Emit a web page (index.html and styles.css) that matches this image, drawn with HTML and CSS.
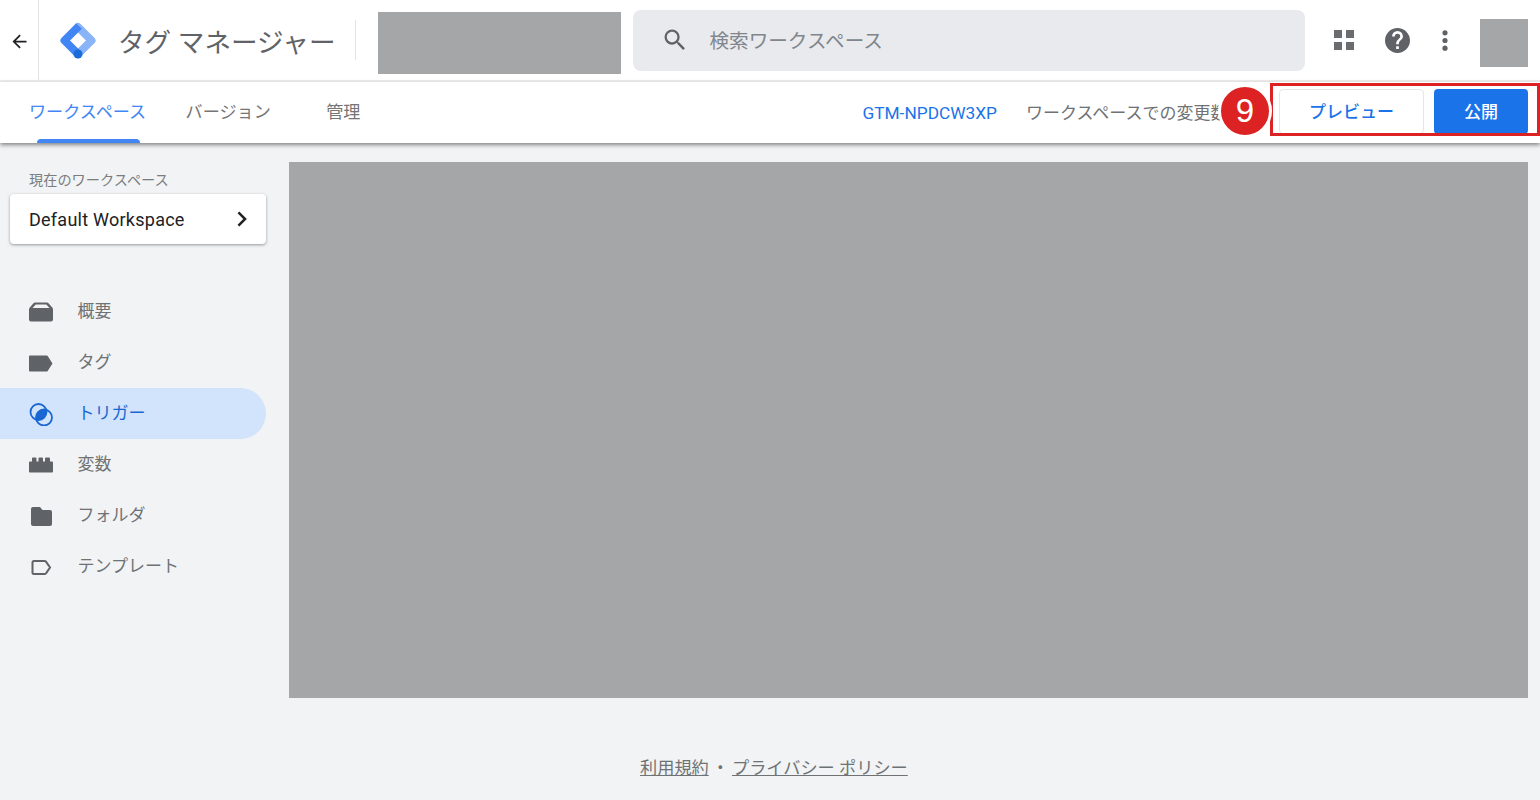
FILE: index.html
```html
<!DOCTYPE html>
<html lang="ja">
<head>
<meta charset="utf-8">
<title>タグ マネージャー</title>
<link rel="stylesheet" href="styles.css">
</head>
<body>
<header class="topbar">
  <div class="back">
    <svg class="back-icon" viewBox="0 0 24 24"><path d="M20 11H7.830l5.590-5.590L12 4l-8 8 8 8 1.410-1.410L7.830 13H20z"/></svg>
  </div>
  <svg class="logo" viewBox="0 0 38 40">
    <path d="M19 6 32.500 19.500 19 33" fill="none" stroke="#8ab4f8" stroke-width="8" stroke-linejoin="round" stroke-linecap="round"/>
    <path d="M20 5 5.500 19.500 19 33" fill="none" stroke="#4285f4" stroke-width="8" stroke-linejoin="round"/>
    <circle cx="19" cy="33" r="4.500" fill="#1a6cd9"/>
  </svg>
  <div class="product">タグ マネージャー</div>
  <div class="divider"></div>
  <div class="redacted account"></div>
  <div class="search">
    <svg class="search-icon" viewBox="0 0 24 24"><path d="M15.500 14h-.790l-.280-.270A6.470 6.470 0 0 0 16 9.500 6.500 6.500 0 1 0 9.500 16c1.610 0 3.090-.590 4.230-1.570l.270.280v.790l5 4.990L20.490 19l-4.990-5zm-6 0C7.010 14 5 11.990 5 9.500S7.010 5 9.500 5 14 7.010 14 9.500 11.990 14 9.500 14z"/></svg>
    <span class="search-text">検索ワークスペース</span>
  </div>
  <div class="top-icons">
    <svg class="apps" viewBox="0 0 20 20"><path d="M0 0h8v8H0zM12 0h8v8h-8zM0 12h8v8H0zM12 12h8v8h-8z"/></svg>
    <svg class="help" viewBox="0 0 24 24"><path d="M12 0a12 12 0 1 0 0 24 12 12 0 0 0 0-24zm1.300 20.200h-2.600v-2.600h2.600zm2.700-9.300-1.200 1.200c-1 1-1.500 1.700-1.500 3.400h-2.600V15c0-1.300.5-2.500 1.500-3.500l1.600-1.600c.5-.5.800-1.100.8-1.800a2.600 2.600 0 0 0-5.200 0H6.800a5.200 5.200 0 0 1 10.400 0c0 1.100-.5 2.100-1.200 2.800z"/></svg>
    <svg class="more" viewBox="0 0 6 22"><circle cx="3" cy="3" r="2.700"/><circle cx="3" cy="11" r="2.700"/><circle cx="3" cy="19" r="2.700"/></svg>
    <div class="redacted avatar"></div>
  </div>
</header>

<nav class="tabbar">
  <a class="tab active">ワークスペース<span class="indicator"></span></a>
  <a class="tab version">バージョン</a>
  <a class="tab admin">管理</a>
  <div class="tab-right">
    <span class="gtm-id">GTM-NPDCW3XP</span>
    <span class="changes">ワークスペースでの変更数</span>
    <button class="btn preview">プレビュー</button>
    <button class="btn publish">公開</button>
  </div>
  <div class="callout-box"></div>
  <div class="callout-badge">9</div>
</nav>

<div class="layout">
  <aside class="sidebar">
    <div class="ws-label">現在のワークスペース</div>
    <div class="ws-card">
      <span>Default Workspace</span>
      <svg class="chev" viewBox="0 0 12 18"><path d="M2 1.500 9.500 9 2 16.500" fill="none" stroke="#202124" stroke-width="2.800"/></svg>
    </div>
    <ul class="nav">
      <li class="nav-item">
        <svg class="nav-icon" viewBox="0 0 24 24"><path d="M6 2.500h12a2 2 0 0 1 1.500.7L23 7.300c.6.600 1 1.200 1 2.200v10a2 2 0 0 1-2 2H2a2 2 0 0 1-2-2v-10c0-1 .4-1.600 1-2.200l3.500-4.100a2 2 0 0 1 1.500-.7zm.7 2L3.500 8h17l-3.200-3.500z"/></svg>
        <span>概要</span>
      </li>
      <li class="nav-item">
        <svg class="nav-icon" viewBox="0 0 24 24"><path d="M1 4.500h16.500c.5 0 .9.200 1.200.6L23.500 12.500l-4.800 7.400c-.3.400-.7.600-1.200.6H1a1 1 0 0 1-1-1v-14a1 1 0 0 1 1-1z"/></svg>
        <span>タグ</span>
      </li>
      <li class="nav-item selected">
        <svg class="nav-icon" viewBox="0 0 24 24">
          <clipPath id="lens"><circle cx="9.500" cy="10" r="8"/></clipPath>
          <circle cx="15" cy="15.500" r="8" clip-path="url(#lens)"/>
          <circle cx="9.500" cy="10" r="8" fill="none" stroke="currentColor" stroke-width="1.800"/>
          <circle cx="15" cy="15.500" r="8" fill="none" stroke="currentColor" stroke-width="1.800"/>
        </svg>
        <span>トリガー</span>
      </li>
      <li class="nav-item">
        <svg class="nav-icon" viewBox="0 0 24 24"><path d="M0 9.500a1 1 0 0 1 1-1h2V5.500a1 1 0 0 1 1-1h2.500a1 1 0 0 1 1 1v3h2v-3a1 1 0 0 1 1-1H13a1 1 0 0 1 1 1v3h2v-3a1 1 0 0 1 1-1h3a1 1 0 0 1 1 1v3h2a1 1 0 0 1 1 1v9a1 1 0 0 1-1 1H1a1 1 0 0 1-1-1z"/></svg>
        <span>変数</span>
      </li>
      <li class="nav-item">
        <svg class="nav-icon" viewBox="0 0 24 24"><path d="M4 3h7l2.500 3H21a2 2 0 0 1 2 2v12a2 2 0 0 1-2 2H4a2 2 0 0 1-2-2V5a2 2 0 0 1 2-2z"/></svg>
        <span>フォルダ</span>
      </li>
      <li class="nav-item">
        <svg class="nav-icon" viewBox="0 0 24 24"><path d="M5 6h10.500a2 2 0 0 1 1.500.7L21 12.500l-4 5.800a2 2 0 0 1-1.500.7H5a1.500 1.500 0 0 1-1.500-1.500v-10A1.500 1.500 0 0 1 5 6z" fill="none" stroke="currentColor" stroke-width="2"/></svg>
        <span>テンプレート</span>
      </li>
    </ul>
  </aside>
  <div class="content">
    <main class="redacted panel"></main>
    <footer class="footer"><a>利用規約</a><span class="dot">・</span><a>プライバシー ポリシー</a></footer>
  </div>
</div>
</body>
</html>
```

FILE: styles.css
```css
* { box-sizing: border-box; }
html, body { margin: 0; height: 800px; overflow: hidden; }
body {
  background: #f1f3f4;
  font-family: Roboto, "Noto Sans CJK JP", sans-serif;
  color: #5f6368;
  display: flex;
  flex-direction: column;
}
.redacted { background: #a5a6a7; }

/* top bar */
.topbar {
  height: 82px;
  flex: none;
  background: #fff;
  border-bottom: 2px solid #eeeeee;
  display: flex;
  align-items: center;
}
.back {
  width: 39px;
  height: 80px;
  border-right: 1px solid #e3e3e3;
  display: flex;
  align-items: center;
  padding: 3px 0 0 9px;
  flex: none;
}
.back-icon { width: 21px; height: 21px; fill: #202124; }
.logo { width: 38px; height: 40px; margin: 2px 0 0 20px; flex: none; }
.product {
  font-size: 26.600px;
  line-height: 36px;
  color: #5f6368;
  margin: 6px 0 0 21px;
  width: 217px;
  white-space: nowrap;
}
.divider { width: 1px; height: 40px; background: #e3e3e3; margin-left: 20px; }
.account { width: 243px; height: 62px; margin-left: 22px; align-self: flex-start; margin-top: 12px; }
.search {
  width: 672px;
  height: 61px;
  margin-left: 12px;
  background: #e8eaed;
  border-radius: 8px;
  display: flex;
  align-items: center;
  padding-left: 28px;
}
.search-icon { width: 28px; height: 28px; fill: #5f6368; flex: none; }
.search-text { font-size: 19.600px; color: #80868b; margin: 0 0 2px 20.500px; }
.top-icons { display: flex; align-items: center; margin-left: 29px; }
.apps { width: 20px; height: 20px; fill: #6a6c6f; }
.help { width: 25px; height: 25px; fill: #5f6368; margin-left: 31px; }
.more { width: 6px; height: 21px; fill: #5f6368; margin-left: 32px; }
.avatar { width: 48px; height: 48px; margin: 6px 0 0 32px; }

/* tabs */
.tabbar {
  position: relative;
  height: 61px;
  flex: none;
  background: #fff;
  box-shadow: 0 2px 4px rgba(60, 64, 67, 0.6);
  display: flex;
  align-items: center;
  padding-left: 29px;
  z-index: 1;
}
.tab {
  position: relative;
  font-size: 17.100px;
  line-height: 61px;
  color: #757575;
  white-space: nowrap;
}
.tab.active { color: #4285f4; }
.indicator {
  position: absolute;
  left: 8px;
  width: 103px;
  bottom: 0;
  height: 4px;
  background: #4285f4;
  border-radius: 4px 4px 0 0;
}
.version { margin-left: 39.500px; }
.admin { margin-left: 55.500px; }
.tab-right { margin-left: auto; display: flex; align-items: center; padding-right: 12px; }
.gtm-id { font-size: 17.300px; color: #1a73e8; }
.changes {
  font-size: 17px;
  color: #6f7275;
  margin: 0 0 2px 29px;
  width: 253px;
  white-space: nowrap;
  overflow: hidden;
  padding-right: 30px;
}
.btn {
  height: 45px;
  border-radius: 4px;
  font: 500 17px Roboto, "Noto Sans CJK JP", sans-serif;
  padding: 0 0 2px;
  margin-bottom: 3px;
}
.preview { width: 145px; background: #fff; color: #1a73e8; border: 1px solid #e6e6e6; }
.publish { width: 94px; margin-left: 10px; background: #1a73e8; color: #fff; border: 0; }
.callout-box {
  position: absolute;
  left: 1270px;
  top: 1px;
  width: 270px;
  height: 53px;
  border: 3px solid #dc2222;
}
.callout-badge {
  position: absolute;
  left: 1218px;
  top: 2px;
  width: 54px;
  height: 54px;
  border-radius: 50%;
  background: #dc2222;
  border: 3px solid #fff;
  color: #fff;
  font: 33px/48px "Liberation Sans", sans-serif;
  text-align: center;
}

/* layout */
.layout { flex: 1; display: flex; min-height: 0; }
.sidebar { width: 289px; flex: none; padding-top: 27px; }
.ws-label { font-size: 14.200px; line-height: 20px; color: #7a7d80; margin-left: 29px; }
.ws-card {
  width: 256px;
  height: 50px;
  margin: 4px 0 0 10px;
  padding: 0 18px 0 19px;
  background: #fff;
  border-radius: 4px;
  box-shadow: 0 1px 3px rgba(60, 64, 67, 0.5);
  display: flex;
  align-items: center;
  justify-content: space-between;
  font-size: 18px;
  letter-spacing: 0.25px;
  color: #202124;
}
.chev { width: 12px; height: 16px; }
.nav { list-style: none; margin: 42px 0 0; padding: 0; width: 266px; }
.nav-item {
  height: 51px;
  padding-left: 29px;
  display: flex;
  align-items: center;
  font-size: 17px;
  color: #6f7275;
  border-radius: 0 26px 26px 0;
}
.nav-item span { margin: 0 0 4px 24.500px; }
.nav-icon { width: 24px; height: 24px; fill: currentColor; color: #5f6368; flex: none; }
.nav-item.selected { background: #d2e3fc; color: #1967d2; }
.nav-item.selected .nav-icon { color: #1967d2; }

/* content */
.content { flex: 1; display: flex; flex-direction: column; min-width: 0; padding: 19px 12px 0 0; }
.panel { height: 536px; flex: none; }
.footer {
  margin-top: 56px;
  font-size: 17.200px;
  line-height: 28px;
  color: #6f7275;
  padding-left: 351px;
  white-space: nowrap;
}
.footer a { text-decoration: underline; }
.dot { margin: 0 3px; }
```
